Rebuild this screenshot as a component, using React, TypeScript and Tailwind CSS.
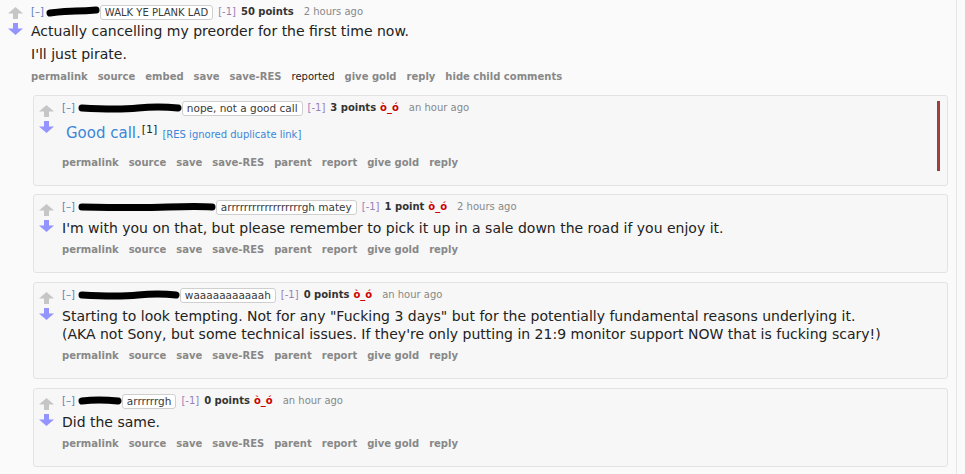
const ff = "font-['DejaVu_Sans',Verdana,sans-serif]"

function Up() {
  return (
    <svg width="15" height="12" viewBox="0 0 15 12">
      <polygon points="7.5,0 15,6.5 10,6.5 10,12 5,12 5,6.5 0,6.5" fill="#c6c6c6" />
    </svg>
  )
}

function Down() {
  return (
    <svg width="15" height="12" viewBox="0 0 15 12">
      <polygon points="5,0 10,0 10,5.5 15,5.5 7.5,12 0,5.5 5,5.5" fill="#9494ff" />
    </svg>
  )
}

function Arrows() {
  return (
    <div className="flex flex-col gap-[4px] pt-[2px] shrink-0">
      <Up />
      <Down />
    </div>
  )
}

function Blob({ w, d, className = 'ml-[3px]' }: { w: number; d: string; className?: string }) {
  return (
    <svg width={w} height="12" viewBox={`0 0 ${w} 12`} className={`shrink-0 ${className}`}>
      <path d={d} stroke="#000" strokeWidth="7" strokeLinecap="round" fill="none" />
    </svg>
  )
}

function Flair({ text, size = 'text-[10.5px]' }: { text: string; size?: string }) {
  return (
    <span className={`border border-[#cfcfcf] rounded-[3px] px-[4px] leading-[13px] ${size} text-[#3a3a3a] bg-white`}>
      {text}
    </span>
  )
}

function Tagline({ blob, flair, points, time, face = true, flairSize }: { blob: React.ReactNode; flair: string; points: string; time: string; face?: boolean; flairSize?: string }) {
  return (
    <div className="flex items-center text-[10px] leading-[14px] h-[14px] whitespace-nowrap">
      <span className="text-[#5b7fb8]">[–]</span>
      {blob}
      <Flair text={flair} size={flairSize} />
      <span className="text-[#9a80b8] ml-[5px]">[-1]</span>
      <span className="font-bold text-[#333] ml-[5px]">{points}</span>
      {face && <span className="font-bold text-[#cc0000] ml-[4px]">ò_ó</span>}
      <span className="text-[#888] ml-[10px]">{time}</span>
    </div>
  )
}

function Buttons({ items }: { items: string[] }) {
  return (
    <div className="flex gap-[10px] text-[10px] leading-[14px] font-bold text-[#888] whitespace-nowrap">
      {items.map((b) =>
        b === 'reported' ? (
          <span key={b} className="font-normal text-[#222]">{b}</span>
        ) : (
          <span key={b}>{b}</span>
        )
      )}
    </div>
  )
}

const childBtns = ['permalink', 'source', 'save', 'save-RES', 'parent', 'report', 'give gold', 'reply']

function Card({ children, tag, bar, className = '' }: { children: React.ReactNode; tag: React.ReactNode; bar?: boolean; className?: string }) {
  return (
    <div className={`ml-[33px] mr-[8px] bg-[#f7f7f7] border border-[#e3e3e3] rounded-[3px] flex pt-[5px] pb-[15px] pl-[5px] ${className}`}>
      <div className="pt-[2px]">
        <Arrows />
      </div>
      <div className="flex-1 ml-[8px] min-w-0">
        {tag}
        {children}
        <div className="mt-[6px]">
          <Buttons items={childBtns} />
        </div>
      </div>
      {bar && <div className="w-[3px] bg-[#a33d3d] mr-[7px] mb-[-1px]" />}
    </div>
  )
}

export default function App() {
  return (
    <div className={`${ff} bg-[#fafafa] w-[965px] h-[474px] overflow-hidden`}>
      <div className="w-[957px] h-[474px] border-r border-[#e6e6e6]">
        <div className="flex pl-[8px] pt-[5px]">
          <Arrows />
          <div className="ml-[8px] flex-1">
            <Tagline
              blob={<Blob w={54} className="ml-[2px]" d="M4 7 Q 20 5 30 5 T 50 4" />}
              flair="WALK YE PLANK LAD"
              flairSize="text-[10px]"
              points="50 points"
              time="2 hours ago"
              face={false}
            />
            <div className="text-[14px] leading-[18px] text-[#222] mt-[3px]">
              <p>Actually cancelling my preorder for the first time now.</p>
              <p className="mt-[5px]">I'll just pirate.</p>
            </div>
            <div className="mt-[7px]">
              <Buttons items={['permalink', 'source', 'embed', 'save', 'save-RES', 'reported', 'give gold', 'reply', 'hide child comments']} />
            </div>
          </div>
        </div>

        <div className="mt-[11px]">
          <Card
            bar
            tag={
              <Tagline
                blob={<Blob w={104} d="M4 6 Q 40 8 60 6 T 100 6" />}
                flair="nope, not a good call"
                points="3 points"
                time="an hour ago"
              />
            }
          >
            <div className="mt-[8px] ml-[4px] flex items-baseline leading-[20px]">
              <span className="text-[15px] text-[#3a86d8]">Good call.</span>
              <sup className="text-[11px] text-[#222] ml-[1px]">[1]</sup>
              <span className="text-[10px] text-[#3a86d8] ml-[5px]">[RES ignored duplicate link]</span>
            </div>
            <div className="h-[5px]" />
          </Card>

          <Card
            className="mt-[8px]"
            tag={
              <Tagline
                blob={<Blob w={138} d="M4 6 Q 60 7 90 6 T 134 6" />}
                flair="arrrrrrrrrrrrrrrrrrgh matey"
                points="1 point"
                time="2 hours ago"
              />
            }
          >
            <p className="text-[14px] leading-[18px] text-[#222] mt-[5px]">
              I'm with you on that, but please remember to pick it up in a sale down the road if you enjoy it.
            </p>
          </Card>

          <Card
            className="mt-[9px]"
            tag={
              <Tagline
                blob={<Blob w={102} d="M4 6 Q 40 8 60 6 T 98 6" />}
                flair="waaaaaaaaaaah"
                points="0 points"
                time="an hour ago"
              />
            }
          >
            <p className="text-[14px] leading-[18px] text-[#222] mt-[5px]">
              Starting to look tempting. Not for any "Fucking 3 days" but for the potentially fundamental reasons underlying it.
              <br />
              (AKA not Sony, but some technical issues. If they're only putting in 21:9 monitor support NOW that is fucking scary!)
            </p>
          </Card>

          <Card
            className="mt-[9px]"
            tag={
              <Tagline
                blob={<Blob w={44} d="M4 6 Q 20 4 40 6" />}
                flair="arrrrrrgh"
                points="0 points"
                time="an hour ago"
              />
            }
          >
            <p className="text-[14px] leading-[18px] text-[#222] mt-[5px]">Did the same.</p>
          </Card>
        </div>
      </div>
    </div>
  )
}
